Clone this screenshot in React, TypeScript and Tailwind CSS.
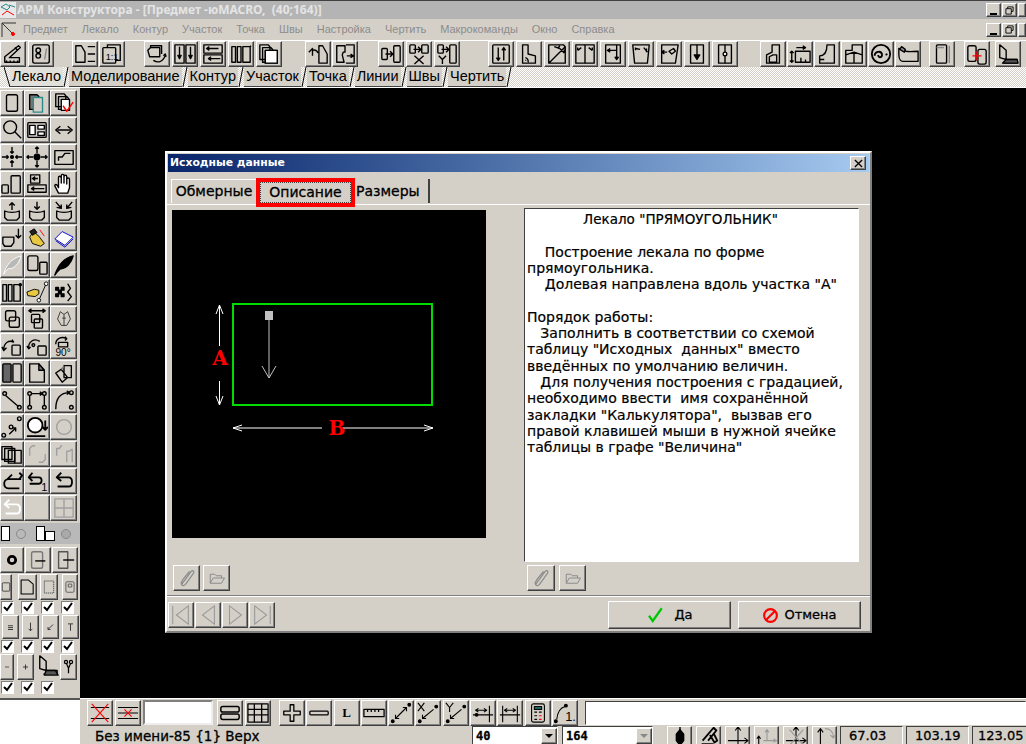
import React from 'react';

const bevel = 'border border-t-white border-l-white border-r-[#404040] border-b-[#404040] bg-[#d4d0c8] shadow-[inset_-1px_-1px_0_#808080]';
const sunken = 'border border-t-[#404040] border-l-[#404040] border-r-white border-b-white';
const heavy = '[-webkit-text-stroke:0.3px_#000]';
const ui = { fontFamily: '"DejaVu Sans", sans-serif' };
const arial = { fontFamily: '"Liberation Sans", sans-serif' };

// small drawing helper, every icon sits on a 24x24 grid
const Ico: React.FC<{ children: React.ReactNode; c?: string; sw?: number }> = ({ children, c = '#000', sw = 1.5 }) => (
    <svg viewBox="0 0 24 24" width="22" height="22" fill="none" stroke={c} strokeWidth={sw} strokeLinejoin="round">
        {children}
    </svg>
);

const Btn: React.FC<{ children?: React.ReactNode; className?: string }> = ({ children, className = 'w-[26px] h-[26px]' }) => (
    <div className={`${bevel} ${className} flex items-center justify-center shrink-0 overflow-hidden`}>{children}</div>
);

const P: React.FC<{ d: string; c?: string; f?: string }> = ({ d, c, f }) => <path d={d} stroke={c} fill={f} />;

const topGroups: { ml: string; gap: string; icons: React.ReactNode[] }[] = [
    { ml: 'ml-0', gap: 'gap-[2px]', icons: [
        <Ico><P d="M3 21V15L18 3l2 2L8 16h11v5zM5 21v-2M9 21v-2M13 21v-2M17 21v-2M14 5l3 3" /></Ico>,
        <Ico><rect x="3" y="2" width="18" height="20" rx="2" /><circle cx="9" cy="8" r="2.5" /><circle cx="9" cy="14" r="2.5" /><P d="M18 6l-2 12" c="#888" /></Ico>,
    ] },
    { ml: 'ml-[18px]', gap: 'gap-[1px]', icons: [
        <Ico><P d="M2 21V3h6l4 7v11zM15 4h8M15 12h8M15 20h8" /></Ico>,
        <Ico><rect x="2" y="5" width="14" height="17" rx="1" /><P d="M7 5V2h14v17h-5" /><text x="12" y="18" fontSize="10" fill="#000" stroke="none" textAnchor="middle" style={arial}>1:1</text></Ico>,
    ] },
    { ml: 'ml-[19px]', gap: 'gap-[2px]', icons: [
        <Ico><P d="M2 8l3-3h10v10H4zM5 5V3h12v9M8 19c5 3 10 2 13-5M19 14l2-2 1 3" /></Ico>,
        <Ico><rect x="1" y="2" width="10" height="20" /><rect x="13" y="2" width="10" height="20" /><P d="M6 4v12M4 13l2 4 2-4M18 4v12M16 13l2 4 2-4" /></Ico>,
        <Ico><rect x="2" y="2" width="20" height="9" /><rect x="2" y="13" width="20" height="9" /><P d="M18 6H6M8 4L5 6l3 2M20 17H8M10 15l-3 2 3 2" /></Ico>,
        <Ico><P d="M2 4h4v17H2zM8 4h4v17H8zM14 4h8v17h-8zM22 4l1-1" /></Ico>,
        <Ico><P d="M2 2h9l2 2v14H2zM5 5h9l2 2v14H5zM8 8h13v14H8z" /><rect x="8" y="8" width="13" height="14" fill="#fff" /></Ico>,
    ] },
    { ml: 'ml-[23px]', gap: 'gap-[1px]', icons: [
        <Ico><P d="M13 3h4l5 9v10h-9zM2 10l4-4v8M6 8c3-1 5 0 6 3" /></Ico>,
        <Ico><P d="M3 3h9v7h-2l-1 3 2 8H3zM13 2h9v20h-9M14 14h6M18 12l3 2-3 2" /></Ico>,
    ] },
    { ml: 'ml-[20px]', gap: 'gap-[2px]', icons: [
        <Ico><rect x="2" y="6" width="6" height="12" rx="1" /><rect x="15" y="3" width="7" height="18" rx="1" /><P d="M6 12h7M11 9l3 3-3 3" /></Ico>,
        <Ico><rect x="2" y="2" width="6" height="9" rx="1" /><rect x="15" y="2" width="7" height="9" rx="1" /><P d="M6 7h7M11 4l3 3-3 3M7 14l10 9M17 14L7 23" /></Ico>,
        <Ico><rect x="2" y="2" width="6" height="9" rx="1" /><rect x="15" y="2" width="7" height="20" rx="1" /><P d="M6 7h7M11 4l3 3-3 3M3 14l4 4 4-4M7 18v5" /></Ico>,
    ] },
    { ml: 'ml-[28px]', gap: 'gap-[2px]', icons: [
        <Ico><rect x="3" y="2" width="18" height="20" rx="1" /><P d="M9 5v14M7 16l2 3 2-3M15 19V5M13 8l2-3 2 3" /></Ico>,
        <Ico><P d="M5 2h6v10l8 2v8H5zM8 16a4 4 0 0 1 3 5M8 19h1" /></Ico>,
        <Ico><P d="M3 2h16l2 2v18H3zM3 22L21 4M9 4l6 2M15 3l-2 3M15 6l5 5M20 7v4" /></Ico>,
        <Ico><rect x="2" y="2" width="20" height="20" /><P d="M12 2v20M4 8l4-3M4 5l0 3M20 8l-4-3M20 5v3" /></Ico>,
        <Ico><P d="M4 2h16v20H4zM16 2v15M14 15l2 3 2-3M6 8h10M9 6L6 8l3 2" /></Ico>,
        <Ico><P d="M3 2h18l-2 20H5zM6 6l5 1M15 5l4 5M6 5v3M18 6v4" /></Ico>,
        <Ico><P d="M4 2h18l-3 20H4zM4 10h6M7 8l-3 2 3 2M12 9l5-3 2 3-4 3z" /></Ico>,
        <Ico><rect x="5" y="2" width="14" height="20" /><P d="M12 2v14" /><P d="M9 13h6l-3 5z" f="#000" /></Ico>,
        <Ico><rect x="5" y="2" width="14" height="20" /><P d="M12 2v20" /><circle cx="12" cy="12" r="2" fill="#fff" /></Ico>,
    ] },
    { ml: 'ml-[22px]', gap: 'gap-[1px]', icons: [
        <Ico><P d="M11 2h8v20H5v-9l6-3z" /><P d="M8 21v-6l4-2h4v8z" /></Ico>,
        <Ico><rect x="7" y="9" width="16" height="12" /><P d="M3 9v12M1 11l2-2 2 2M1 19l2 2 2-2M8 5h10M15 3l3 2-3 2M13 16v5M18 18v3" /></Ico>,
        <Ico><P d="M12 2h8v20H4v-8c6 0 8-4 8-12zM4 18h5" /></Ico>,
        <Ico><P d="M3 8h7V2h11v20H3zM3 13l9-3 9 3M12 10v12" /></Ico>,
        <Ico sw={2}><circle cx="12" cy="12" r="10" /><P d="M5 14c0-5 7-6 8-2s-4 5-4 1M17 13l2-1" /></Ico>,
        <Ico><P d="M2 6l8 3c4 1 8 0 13 0v11H6C3 20 2 15 2 12z" /><P d="M3 7l5 3 1-3-4-3z" f="#999" /></Ico>,
    ] },
    { ml: 'ml-[8px]', gap: 'gap-0', icons: [
        <Ico><rect x="6" y="2" width="11" height="20" rx="1" /><P d="M20 3v19" c="#888" /><P d="M6 5h8" c="#888" /></Ico>,
    ] },
    { ml: 'ml-[9px]', gap: 'gap-0', icons: [
        <Ico><rect x="2" y="3" width="9" height="17" rx="2" /><rect x="13" y="7" width="9" height="16" rx="2" /><P d="M12 9v10M7 14h10" c="#f00" /></Ico>,
    ] },
    { ml: 'ml-[5px]', gap: 'gap-0', icons: [
        <Ico><P d="M3 2l7 6v10l-7-2zM10 18h12v4H7" /><P d="M10 18h12l1 4H6z" f="#555" /></Ico>,
    ] },
];

const tabs = ['Лекало', 'Моделирование', 'Контур', 'Участок', 'Точка', 'Линии', 'Швы', 'Чертить'];
const menu = ['Предмет', 'Лекало', 'Контур', 'Участок', 'Точка', 'Швы', 'Настройка', 'Чертить', 'Макрокоманды', 'Окно', 'Справка'];
const colW = ['w-[24px]', 'w-[26px]', 'w-[27px]'];

const cup = 'M4 12v7l3 3h10l3-3v-7c-4 2-12 2-16 0z';
const gray = '#a0a0a0';
const leftRows: React.ReactNode[][] = [
    [<Ico><rect x="6" y="3" width="12" height="18" rx="2" /></Ico>,
     <Ico><P d="M4 3h8l2 2v14H4z" f="#777" /><P d="M8 6h10v16H8z" f="#d4d0c8" c="#2a8a8a" /></Ico>,
     <Ico><P d="M3 2h9l2 2v12H3zM6 5h9l2 2v12H6z" /><P d="M9 8h9v12H9z" f="#fff" /><P d="M11 15l4 6 7-10" c="#f00" /></Ico>],
    [<Ico><circle cx="10" cy="9" r="7" /><P d="M15 14l7 7" /></Ico>,
     <Ico><rect x="2" y="4" width="20" height="16" rx="1" /><rect x="4" y="7" width="6" height="10" fill="#fff" /><P d="M13 7h7v4h-7zM13 14h7v4h-7z" f="#fff" /></Ico>,
     <Ico><P d="M5 12h14M8 8l-5 4 5 4M16 8l5 4-5 4" /></Ico>],
    [<Ico><circle cx="12" cy="12" r="1.5" fill="#000" /><P d="M1 12h7M6 10l2 2-2 2M23 12h-7M18 10l-2 2 2 2M12 1v7M10 6l2 2 2-2M12 23v-7M10 18l2-2 2 2" /></Ico>,
     <Ico><circle cx="12" cy="12" r="3" fill="#000" /><P d="M1 12h7M3 10l-2 2 2 2M23 12h-7M21 10l2 2-2 2M12 1v7M10 3l2-2 2 2M12 23v-7M10 21l2 2 2-2" /></Ico>,
     <Ico><P d="M2 5h20v15H2zM6 16v-4h4l3-4h6" /></Ico>],
    [<Ico><rect x="1" y="13" width="7" height="9" rx="1" /><rect x="11" y="3" width="10" height="19" rx="1" /></Ico>,
     <Ico><rect x="5" y="2" width="10" height="9" /><rect x="2" y="13" width="20" height="8" /><P d="M13 6H8M10 4L7 6l3 2M20 17H6M9 15l-3 2 3 2" /></Ico>,
     <Ico><P d="M6 22l-4-8c0-2 2-2 3 0l1 2V5c0-2 2-2 3 0v6V3c0-2 3-2 3 0v8V4c0-2 3-2 3 0v8V7c0-2 3-2 3 0v9l-2 6z" f="#fff" /></Ico>],
    [<Ico><P d={cup} /><P d="M12 11V3M9 6l3-3 3 3" /></Ico>,
     <Ico><P d={cup} /><P d="M12 2v8M9 7l3 3 3-3" /></Ico>,
     <Ico><P d={cup} /><P d="M3 2l6 7M4 8l5 1 0-4M21 2l-6 7M20 8l-5 1 0-4" /></Ico>],
    [<Ico><P d="M2 11h12v6l-3 4H4l-2-3zM19 2v10M16 9l3 3 3-3" /></Ico>,
     <Ico sw={1}><P d="M8 5l6 5 6 8-4 3-9-3-3-7z" f="#e8c840" /><P d="M15 3l5 7" c="#f00" /><P d="M4 5l5-3 3 4-5 3z" f="#222" /></Ico>,
     <Ico sw={1}><P d="M2 13l8-8 12 6-9 9z" f="#fff" c="#00c" /><P d="M3 15l10 7 9-9" c="#00c" /></Ico>],
    [<Ico c={gray} sw={1}><P d="M3 22c2-9 8-17 19-20-2 8-8 15-14 14l-3 3z" f="#b8b8b8" c="#fff" /></Ico>,
     <Ico><rect x="2" y="2" width="11" height="16" rx="2" /><rect x="15" y="9" width="8" height="13" rx="1" c="#999" /></Ico>,
     <Ico><P d="M2 23c3-9 8-18 20-21-2 8-8 15-14 14l-3 3z" f="#000" /></Ico>],
    [<Ico><P d="M2 4h4v18H2zM8 4h4v18H8zM14 4h7v18h-7z" /><circle cx="21" cy="4" r="1.2" fill="#000" /></Ico>,
     <Ico sw={1}><P d="M1 12l8-3 5 1 0 4-4 3-8-1z" f="#e8c840" /><P d="M22 3L14 21" /><circle cx="22" cy="3" r="2" fill="#fff" /><circle cx="14" cy="21" r="2" fill="#fff" /></Ico>,
     <Ico><P d="M3 7h3v3H3zM9 7h3v3H9zM3 14h3v3H3zM9 14h3v3H9zM6 10h3v4H6z" f="#000" /><P d="M16 3l3 5-3 4 4 5-4 5" /></Ico>],
    [<Ico><rect x="5" y="3" width="11" height="11" rx="2" /><rect x="9" y="10" width="11" height="11" rx="2" /></Ico>,
     <Ico><rect x="6" y="7" width="9" height="9" rx="1" /><rect x="9" y="12" width="9" height="10" rx="1" /><P d="M3 3h18M6 1L3 3l3 2M18 1l3 2-3 2" /></Ico>,
     <Ico c="#333" sw={1}><P d="M8 4l4 3 4-3 3 8-4 7H9l-4-7zM12 7v12M10 11h4" /></Ico>],
    [<Ico><rect x="12" y="11" width="9" height="11" rx="1" /><P d="M3 16C3 8 9 5 14 8M1 13l2 4 3-3M14 8l-2-3" /></Ico>,
     <Ico><rect x="13" y="12" width="9" height="10" rx="1" /><circle cx="8" cy="11" r="1.5" /><P d="M3 15C2 7 9 3 15 7M1 12l2 3 2-2" /></Ico>,
     <Ico><P d="M3 10C3 4 9 1 15 4M13 2l2 2-2 2M6 8h10v5H6z" /><text x="11" y="23" fontSize="11" fill="#000" stroke="none" textAnchor="middle" style={arial}>90°</text></Ico>],
    [<Ico><rect x="2" y="2" width="9" height="20" rx="1" fill="#666" /><rect x="13" y="2" width="9" height="20" rx="1" /></Ico>,
     <Ico><P d="M4 2h10l6 7v13H4z" /><P d="M14 2l6 7h-6z" f="#777" /></Ico>,
     <Ico><P d="M12 4h8v13h-8zM3 12l6-4 7 9-6 5z" /><P d="M9 8l3-3" c="#777" /></Ico>],
    [<Ico><circle cx="4" cy="5" r="2" /><circle cx="20" cy="20" r="2" /><P d="M5 7l14 12" /></Ico>,
     <Ico><circle cx="4" cy="5" r="2" /><circle cx="20" cy="5" r="2" /><circle cx="4" cy="20" r="2" /><circle cx="20" cy="20" r="2" /><P d="M4 7v11M20 7v11M6 5h12M15 3l3 2-3 2" /></Ico>,
     <Ico><circle cx="20" cy="4" r="2" /><circle cx="20" cy="20" r="2" /><P d="M3 22C3 10 8 4 18 4M15 2l3 2-3 2" /></Ico>],
    [<Ico><circle cx="3" cy="21" r="2" /><circle cx="11" cy="12" r="2" /><circle cx="20" cy="3" r="2" /><P d="M9 20l7-7M12 13l4 0 0 4" /></Ico>,
     <Ico sw={2}><circle cx="10" cy="10" r="8" fill="#fff" /><P d="M1 22h20M21 5v10M18 12l3 3 3-3" /></Ico>,
     <Ico c={gray}><circle cx="12" cy="12" r="8" /></Ico>],
    [<Ico><P d="M1 4h11v14H1zM4 6h11v14H4zM8 8h14v14H8z" /><P d="M15 8v14" /></Ico>,
     <Ico c={gray}><P d="M4 14V6l3-3h3M14 21h4l3-3v-6" /></Ico>,
     <Ico c={gray}><P d="M4 14V6h3l2-3h1M15 21V9h3l2-2h1v14" /></Ico>],
    [<Ico sw={2}><P d="M22 10H8c-6 0-6 10 0 10h12M12 5l-5 5 0 0M20 3l3 3-3 4" /></Ico>,
     <Ico sw={2}><P d="M3 8h11c4 0 4 7 0 7H4M7 3L3 8l4 4" /><text x="20" y="23" fontSize="12" fill="#000" stroke="none" textAnchor="middle" style={arial}>1</text></Ico>,
     <Ico sw={2}><P d="M4 8h13c5 0 5 10 0 10H5M9 3L4 8l5 4" /></Ico>],
    [<Ico c={gray} sw={2}><P d="M4 8h13c5 0 5 10 0 10H5M9 3L4 8l5 4" c="#fff" /></Ico>,
     null,
     <Ico c={gray}><rect x="2" y="2" width="20" height="20" /><P d="M12 2v20M2 12h20" /></Ico>],
];

const Check = () => (
    <div className="w-[13px] h-[13px] bg-white border border-t-[#808080] border-l-[#808080] border-r-white border-b-white flex items-center justify-center">
        <svg viewBox="0 0 10 10" width="10" height="10" fill="none" stroke="#000" strokeWidth="2"><path d="M1 5l3 3 5-7" /></svg>
    </div>
);

const CheckRow: React.FC<{ n: number }> = ({ n }) => (
    <div className="h-[14px] flex items-center gap-[7px] pl-[1px]">
        {Array.from({ length: n }).map((_, i) => <Check key={i} />)}
    </div>
);

const bottomTop: React.ReactNode[] = [
    <Ico sw={1.2}><P d="M2 6h20M2 18h20" /><P d="M3 2l18 20M21 2L3 22" c="#f00" /></Ico>,
    <Ico sw={1.2}><P d="M1 6h22M1 12h22M1 18h22" /><P d="M8 8l8 8M16 8l-8 8" c="#f00" /></Ico>,
];
const bottomA: React.ReactNode[] = [
    <Ico sw={1.6}><rect x="2" y="5" width="20" height="6" rx="2" /><rect x="2" y="13" width="20" height="6" rx="2" /></Ico>,
    <Ico sw={1.4}><rect x="1" y="2" width="22" height="20" /><P d="M1 8h22M1 14h22M8 2v20M16 2v20" /></Ico>,
];
const bottomB: React.ReactNode[] = [
    <Ico sw={1.4}><P d="M10 3h4v7h7v4h-7v7h-4v-7H3v-4h7z" /></Ico>,
    <Ico sw={1.4}><rect x="2" y="10" width="20" height="4" rx="1" /></Ico>,
    <span className="text-[13px] font-bold text-black" style={{ fontFamily: '"Liberation Serif", serif' }}>L</span>,
    <Ico sw={1.4}><rect x="1" y="8" width="22" height="8" /><P d="M5 8v3M9 8v3M13 8v3M17 8v3" /></Ico>,
    <Ico sw={1.2}><circle cx="3" cy="21" r="1.5" fill="#000" /><circle cx="21" cy="3" r="1.5" fill="#000" /><P d="M6 18L18 6M6 14v4h4M18 10V6h-4" /></Ico>,
    <Ico sw={1.2}><circle cx="3" cy="21" r="1.5" fill="#000" /><circle cx="21" cy="5" r="1.5" fill="#000" /><P d="M6 18L18 8M1 1l7 9M8 1L1 10M6 14v4h4" /></Ico>,
    <Ico sw={1.2}><circle cx="3" cy="21" r="1.5" fill="#000" /><circle cx="21" cy="5" r="1.5" fill="#000" /><P d="M6 18L18 8M1 1l4 5 4-5M5 6v5M6 14v4h4" /></Ico>,
    <Ico sw={1.2}><P d="M1 14h22M19 4v18M5 9h10M7 7L4 9l3 2M13 7l3 2-3 2" /><circle cx="5" cy="14" r="1.5" fill="#000" /></Ico>,
    <Ico sw={1.2}><P d="M1 14h22M4 4v18M20 4v18M7 9h10M9 7L6 9l3 2M15 7l3 2-3 2" /></Ico>,
    <Ico sw={1.2}><rect x="5" y="2" width="14" height="20" rx="2" /><rect x="8" y="5" width="8" height="3" fill="#2a8a8a" /><P d="M8 11h3M13 11h3M8 15h3M8 19h3" /><P d="M13 15h3M13 19h3" c="#f00" /></Ico>,
    <Ico sw={1.2}><circle cx="2" cy="21" r="1.5" fill="#000" /><circle cx="13" cy="4" r="1.5" fill="#000" /><P d="M3 19C4 10 8 6 12 5" /><text x="18" y="21" fontSize="14" fill="#000" stroke="none" textAnchor="middle" style={arial}>1.</text></Ico>,
];
const bottomC: React.ReactNode[] = [
    <Ico sw={1.5}><P d="M12 2v20" /><P d="M8 10l4-5 4 5v7l-4 5-4-5z" f="#000" /></Ico>,
    <Ico sw={2}><P d="M4 21h13M5 17L17 3l3 3-9 11M13 11l5 8 3-2-4-8" /></Ico>,
    <Ico sw={1.2}><P d="M1 17h22M12 2v20M9 6l3-4 3 4M19 14l4 3-4 3" /></Ico>,
    <Ico sw={1.2}><P d="M8 17h15M12 5v12M19 15l3 2-3 2M10 8l2-3 2 3" c="#999" /><P d="M3 22V12M1 15l2-3 2 3" /></Ico>,
    <Ico sw={1.2}><P d="M1 17h22M12 2v20M9 6l3-4 3 4M19 14l4 3-4 3" /><P d="M5 22L20 5M20 22L5 5" c="#999" /></Ico>,
    <Ico sw={1.2}><P d="M7 22V4M4 8l3-4 3 4" /><P d="M12 4c5 0 9 3 9 9M18 11l3 3 2-3" c="#999" /></Ico>,
];

const Clip = () => (
    <svg viewBox="0 0 24 24" width="20" height="20" fill="none" stroke="#8a8a8a" strokeWidth="1.5"><path d="M6 19L17 4c2-2 4 0 3 2L10 20c-2 2-5 1-5-2 0-1 1-2 2-4l8-10" /></svg>
);
const Folder = () => (
    <svg viewBox="0 0 24 24" width="18" height="18" fill="none" stroke="#8a8a8a" strokeWidth="1.3"><path d="M3 19V7h6l2 2h7v3M3 19l4-7h15l-4 7z" /></svg>
);

const descLines = [
    '    Построение лекала по форме',
    'прямоугольника.',
    '    Долевая направлена вдоль участка "А"',
    ' ',
    'Порядок работы:',
    '   Заполнить в соответствии со схемой',
    'таблицу "Исходных  данных" вместо',
    'введённых по умолчанию величин.',
    '   Для получения построения с градацией,',
    'необходимо ввести  имя сохранённой',
    'закладки "Калькулятора",  вызвав его',
    'правой клавишей мыши в нужной ячейке',
    'таблицы в графе "Величина"',
];

const Scheme = () => (
    <svg viewBox="0 0 314 328" width="314" height="328" fill="none">
        <rect x="61" y="94" width="199" height="101" stroke="#00dc00" strokeWidth="2" />
        <rect x="93" y="101" width="8" height="9" fill="#c0c0c0" />
        <path d="M97 110v58M90 156l7 12 7-12" stroke="#c0c0c0" />
        <path d="M47.500 95v41M47.500 171v24M44 104l3.500-9 3.500 9M44 186l3.500 9 3.500-9" stroke="#fff" />
        <path d="M61 218h89M171 218h90M70 215l-9 3 9 3M252 215l9 3-9 3" stroke="#fff" />
        <text x="48" y="155" fontSize="20" fontWeight="700" fill="#f00" textAnchor="middle" style={{ fontFamily: '"DejaVu Serif", serif' }}>A</text>
        <text x="165" y="225" fontSize="20" fontWeight="700" fill="#f00" textAnchor="middle" style={{ fontFamily: '"DejaVu Serif", serif' }}>B</text>
    </svg>
);

const Dialog = () => (
    <div className="ml-[85px] mt-[63px] w-[707px] h-[482px] bg-[#d4d0c8] border-2 border-t-white border-l-white border-r-[#808080] border-b-[#808080] flex flex-col">
        <div className="mx-px mt-px h-[18px] shrink-0 flex items-center justify-between pl-[2px] pr-[3px] bg-gradient-to-r from-[#0a246a] to-[#a6caf0]">
            <span className="text-[10.800px] font-bold text-white" style={ui}>Исходные данные</span>
            <div className={`${bevel} w-[16px] h-[14px] flex items-center justify-center`}>
                <svg viewBox="0 0 10 10" width="9" height="9" stroke="#000" strokeWidth="1.500"><path d="M1 1l8 8M9 1l-8 8" /></svg>
            </div>
        </div>
        <div className={`h-[33px] shrink-0 flex items-end pl-[4px] text-[14px] text-black border-b border-b-white ${heavy}`} style={ui}>
            <div className="h-[24px] w-[85px] border-t border-l border-t-white border-l-white flex items-center justify-center bg-[#d4d0c8] mb-[1px]">Обмерные</div>
            <div className="h-[29px] w-[99px] border-4 border-[#f00] shrink-0 -mb-[3px] flex items-center justify-center z-10">
                <div className="h-[21px] w-[91px] border border-dotted border-[#404040] bg-[#d4d0c8] flex items-center justify-center">Описание</div>
            </div>
            <div className="h-[24px] w-[75px] border-r-2 border-r-[#404040] flex items-center pl-[1px] mb-[1px] whitespace-nowrap">Размеры</div>
        </div>
        <div className="flex pl-[5px] pt-[3px]">
            <div className="w-[314px] pt-[2px]">
                <div className="w-[314px] h-[328px] bg-black"><Scheme /></div>
                <div className="flex gap-[3px] mt-[27px] ml-[1px]">
                    <Btn className="w-[27px] h-[26px]"><Clip /></Btn>
                    <Btn className="w-[27px] h-[26px]"><Folder /></Btn>
                </div>
            </div>
            <div className="ml-[38px] w-[335px]">
                <div className={`${sunken} w-[335px] h-[354px] bg-white px-[2px] pt-[2px] text-[14px] leading-[16.300px] text-black whitespace-pre overflow-hidden [-webkit-text-stroke:0.2px_#000]`} style={ui}>
                    <div className="text-center text-[13.500px] pr-[22px]">Лекало "ПРЯМОУГОЛЬНИК"</div>
                    <div> </div>
                    {descLines.map((l, i) => <div key={i}>{l}</div>)}
                </div>
                <div className="flex gap-[4px] mt-[3px] ml-[3px]">
                    <Btn className="w-[28px] h-[26px]"><Clip /></Btn>
                    <Btn className="w-[27px] h-[26px]"><Folder /></Btn>
                </div>
            </div>
        </div>
        <div className="mt-[4px] h-[2px] bg-white border-t border-t-[#808080] shrink-0" />
        <div className="flex items-start pl-[1px] pr-[9px] mt-[4px]">
            <div className="flex gap-px mt-px">
                {['M3 2v20M20 2L7 12l13 10z', 'M19 2L6 12l13 10z', 'M6 2l13 10L6 22z', 'M4 2l13 10L4 22zM21 2v20'].map((d) => (
                    <Btn key={d} className="w-[26px] h-[26px]">
                        <svg viewBox="0 0 24 24" width="22" height="22" fill="none" stroke="#9a9a9a" strokeWidth="1.2"><path d={d} /></svg>
                    </Btn>
                ))}
            </div>
            <div className="ml-auto flex gap-[7px]">
                <div className={`${bevel} ${heavy} w-[123px] h-[28px] flex items-center justify-center gap-[10px] text-[13px] text-black`} style={ui}>
                    <svg viewBox="0 0 24 24" width="18" height="18" fill="none" stroke="#00c800" strokeWidth="3"><path d="M4 13l5 7L21 3" /></svg>
                    Да
                </div>
                <div className={`${bevel} ${heavy} w-[123px] h-[28px] flex items-center justify-center gap-[5px] text-[13px] text-black`} style={ui}>
                    <svg viewBox="0 0 24 24" width="17" height="17" fill="none" stroke="#f00" strokeWidth="3"><circle cx="12" cy="12" r="9" /><path d="M6 18L18 6" /></svg>
                    Отмена
                </div>
            </div>
        </div>
    </div>
);

const WinBtns = () => (
    <div className="flex gap-[1px] ml-auto">
        <Btn className="w-[15px] h-[14px] items-end! pb-[1px]"><div className="w-[7px] h-[2px] bg-black" /></Btn>
        <Btn className="w-[15px] h-[14px]">
            <svg viewBox="0 0 10 10" width="9" height="9" fill="none" stroke="#000"><path d="M3 3V1h6v5H7M1 3h6v6H1z" /></svg>
        </Btn>
        <Btn className="w-[8px] h-[14px]" />
    </div>
);

export default function App() {
    return (
        <div className="w-[1026px] h-[744px] overflow-hidden flex flex-col bg-[#d4d0c8]" style={ui}>
            {/* title */}
            <div className="h-[19px] shrink-0 border-t border-t-[#404040] bg-[#b4b4b4] flex items-center">
                <div className="w-[16px] h-[16px] bg-[#e8e8e8] shrink-0">
                    <svg viewBox="0 0 16 16" width="16" height="16" fill="none" stroke="#2a8a8a"><path d="M1 5l5-3 4 3-3 3zM9 3l6 2" /><path d="M2 13l5-4 7 4" stroke="#f00" /></svg>
                </div>
                <span className="ml-[1px] text-[12px] font-bold text-[#e4e4e4] whitespace-pre" style={{ fontFamily: '"Noto Sans", sans-serif' }}>АРМ Конструктора - [Предмет -юMACRO,  (40;164)]</span>
                <WinBtns />
            </div>
            {/* menu */}
            <div className="h-[21px] shrink-0 flex items-center">
                <svg viewBox="0 0 16 16" width="16" height="16" fill="none" stroke="#333" className="ml-[1px]"><path d="M1 1h14M1 1v14M1 1l11 11" /><circle cx="12" cy="12" r="1.500" fill="#f00" stroke="#f00" /></svg>
                <div className="flex gap-[14px] ml-[6px] text-[11px] text-[#8c8c8c]" style={arial}>
                    {menu.map((m) => <span key={m}>{m}</span>)}
                </div>
                <WinBtns />
            </div>
            {/* main toolbar */}
            <div className="h-[27px] shrink-0 border-t border-t-white flex items-start overflow-hidden">
                {topGroups.map((g, i) => (
                    <div key={i} className={`flex shrink-0 ${g.ml} ${g.gap}`}>
                        {g.icons.map((ic, j) => <Btn key={j}>{ic}</Btn>)}
                    </div>
                ))}
            </div>
            {/* mode tabs */}
            <div className="h-[21px] shrink-0 flex items-end border-b border-b-white bg-[repeating-conic-gradient(#ffffff_0%_25%,#d4d0c8_0%_50%)] bg-size-[2px_2px] text-[14.500px] text-black pl-[4px]" style={arial}>
                <svg viewBox="0 0 6 20" width="6" height="20" fill="none" stroke="#000" className="shrink-0"><path d="M0 0l6 20" /></svg>
                {tabs.map((t, i) => (
                    <React.Fragment key={t}>
                        <span className={`h-[20px] flex items-center px-[2px] border-b border-b-[#404040] whitespace-nowrap ${i === 0 ? 'bg-[#e2e0da]' : 'bg-[#d4d0c8]'}`}>{t}</span>
                        <svg viewBox="0 0 6 20" width="6" height="20" fill="none" stroke="#000" className="shrink-0"><path d="M1 20L5 0" /></svg>
                    </React.Fragment>
                ))}
            </div>
            {/* workspace */}
            <div className="flex-1 flex min-h-0">
                <div className="w-[80px] shrink-0 flex flex-col bg-white">
                    <div className="h-[612px] bg-[#d4d0c8] border-b-2 border-b-[#555] overflow-hidden pt-[2px]">
                        <div className="flex flex-col gap-[1px]">
                            {leftRows.map((r, i) => (
                                <div key={i} className="flex">
                                    {r.map((ic, j) => <Btn key={j} className={`${colW[j]} h-[26px]`}>{ic}</Btn>)}
                                </div>
                            ))}
                        </div>
                        <div className="h-[21px] mt-[2px] bg-[#b9b9b9] flex items-center gap-[6px] pl-[1px]">
                            <div className="w-[9px] h-[15px] bg-white border border-black" />
                            <div className="w-[10px] h-[10px] rounded-full border border-[#888]" />
                            <div className="w-[9px] h-[15px] bg-white border border-black ml-[4px]" />
                            <div className="w-[10px] h-[10px] bg-white border border-black -ml-[6px] mt-[4px]" />
                            <div className="w-[10px] h-[10px] rounded-full border border-[#888] bg-[#aaa]" />
                        </div>
                        <div className="flex gap-[1px] mt-[3px]">
                            <Btn className="w-[24px] h-[26px]"><Ico><circle cx="12" cy="12" r="4" strokeWidth="3" /></Ico></Btn>
                            <Btn className="w-[26px] h-[26px]"><Ico c="#777"><rect x="5" y="3" width="12" height="18" rx="2" /><P d="M9 13h11" c="#000" /></Ico></Btn>
                            <Btn className="w-[26px] h-[26px]"><Ico c="#555"><P d="M5 3h10v18H5z" /><P d="M10 12h12" c="#000" /></Ico></Btn>
                        </div>
                        <div className="flex mt-[1px]">
                            <Btn className="w-[12px] h-[26px]"><Ico><rect x="3" y="2" width="18" height="20" rx="2" /></Ico></Btn>
                            <Btn className="ml-[6px] w-[19px] h-[26px]"><Ico><P d="M3 2h10l7 6v14H3z" /></Ico></Btn>
                            <Btn className="ml-[3px] w-[18px] h-[26px]"><Ico c="#555"><rect x="5" y="3" width="14" height="18" strokeDasharray="2 1" /></Ico></Btn>
                            <Btn className="ml-[4px] w-[16px] h-[26px]"><Ico c="#555"><rect x="5" y="3" width="14" height="18" rx="2" /><P d="M9 7h6v5H9z" /></Ico></Btn>
                        </div>
                        <CheckRow n={4} />
                        <div className="flex gap-[3px] mt-[1px] pl-[2px]">
                            {['M8 10h8M8 13h8M8 16h8', 'M12 5v13M9 15l3 3 3-3', 'M8 16l8-8M8 12v4h4', 'M8 7h8M12 7v11'].map((d) => (
                                <Btn key={d} className="w-[17px] h-[24px]"><Ico c="#333"><path d={d} /></Ico></Btn>
                            ))}
                        </div>
                        <CheckRow n={4} />
                        <div className="flex gap-[3px] mt-[1px]">
                            <Btn className="w-[14px] h-[26px]"><Ico c="#333"><path d="M8 12h8" /></Ico></Btn>
                            <Btn className="w-[17px] h-[26px]"><Ico c="#333"><path d="M8 12h8M12 8v8" /></Ico></Btn>
                            <div className="w-[20px] h-[26px] shrink-0"><Ico sw={1.5}><P d="M3 2l7 6v10l-7-2zM10 18h12v4H7" /><P d="M10 18h10l3 5H8z" f="#555" /></Ico></div>
                            <Btn className="w-[17px] h-[26px]"><Ico sw={2}><circle cx="8" cy="4" r="2.500" /><circle cx="16" cy="4" r="2.500" /><P d="M9 7l3 7 3-7M12 14v8" /></Ico></Btn>
                        </div>
                        <CheckRow n={3} />
                    </div>
                </div>
                <div className="flex-1 min-w-0 flex flex-col">
                    <div className="h-[610px] bg-black shrink-0 overflow-hidden">
                        <Dialog />
                    </div>
                    <div className="flex-1 border-t border-t-white flex flex-col pl-[7px]">
                        <div className="flex items-center h-[27px] shrink-0">
                            <div className="flex gap-[2px]">{bottomTop.map((b, i) => <Btn key={i}>{b}</Btn>)}</div>
                            <div className="ml-[2px] w-[70px] h-[25px] bg-white border-2 border-t-[#808080] border-l-[#808080] border-r-[#eeeeee] border-b-[#eeeeee]" />
                            <div className="flex gap-[2px] ml-[4px]">{bottomA.map((b, i) => <Btn key={i}>{b}</Btn>)}</div>
                            <div className="flex gap-[1.300px] ml-[8px]">{bottomB.map((b, i) => <Btn key={i}>{b}</Btn>)}</div>
                            <div className={`${sunken} ml-[7px] flex-1 h-[24px] bg-white`} />
                        </div>
                        <div className={`flex-1 flex items-start text-black ${heavy}`}>
                            <div className="w-[385px] shrink-0 pl-[8px] text-[13.500px] leading-[20px] whitespace-nowrap" style={ui}>Без имени-85 {'{1}'} Верх</div>
                            <div className={`${sunken} w-[86px] shrink-0 h-[20px] bg-white flex items-center justify-between pl-[3px] text-[12px] font-bold`} style={{ fontFamily: '"DejaVu Sans Mono", monospace' }}>
                                40
                                <div className={`${bevel} w-[16px] h-[16px] flex items-center justify-center`}><div className="border-x-[4px] border-x-transparent border-t-[4px] border-t-black" /></div>
                            </div>
                            <div className={`${sunken} ml-[4px] w-[91px] shrink-0 h-[20px] bg-white flex items-center justify-between pl-[3px] text-[12px] font-bold`} style={{ fontFamily: '"DejaVu Sans Mono", monospace' }}>
                                164
                                <div className={`${bevel} w-[16px] h-[16px] flex items-center justify-center`}><div className="border-x-[4px] border-x-transparent border-t-[4px] border-t-[#888]" /></div>
                            </div>
                            <div className="flex gap-[4px] ml-[14px] shrink-0">{bottomC.map((b, i) => <Btn key={i} className="w-[25px] h-[20px]">{b}</Btn>)}</div>
                            <div className="flex gap-[3px] ml-[3px] text-[13px] shrink-0" style={ui}>
                                {['67.03', '103.19', '123.05'].map((v) => (
                                    <div key={v} className={`${sunken} w-[63px] h-[20px] flex items-center pl-[8px] last:w-[60px] last:pl-[5px] whitespace-nowrap`}>{v}</div>
                                ))}
                            </div>
                        </div>
                    </div>
                </div>
            </div>
        </div>
    );
}
